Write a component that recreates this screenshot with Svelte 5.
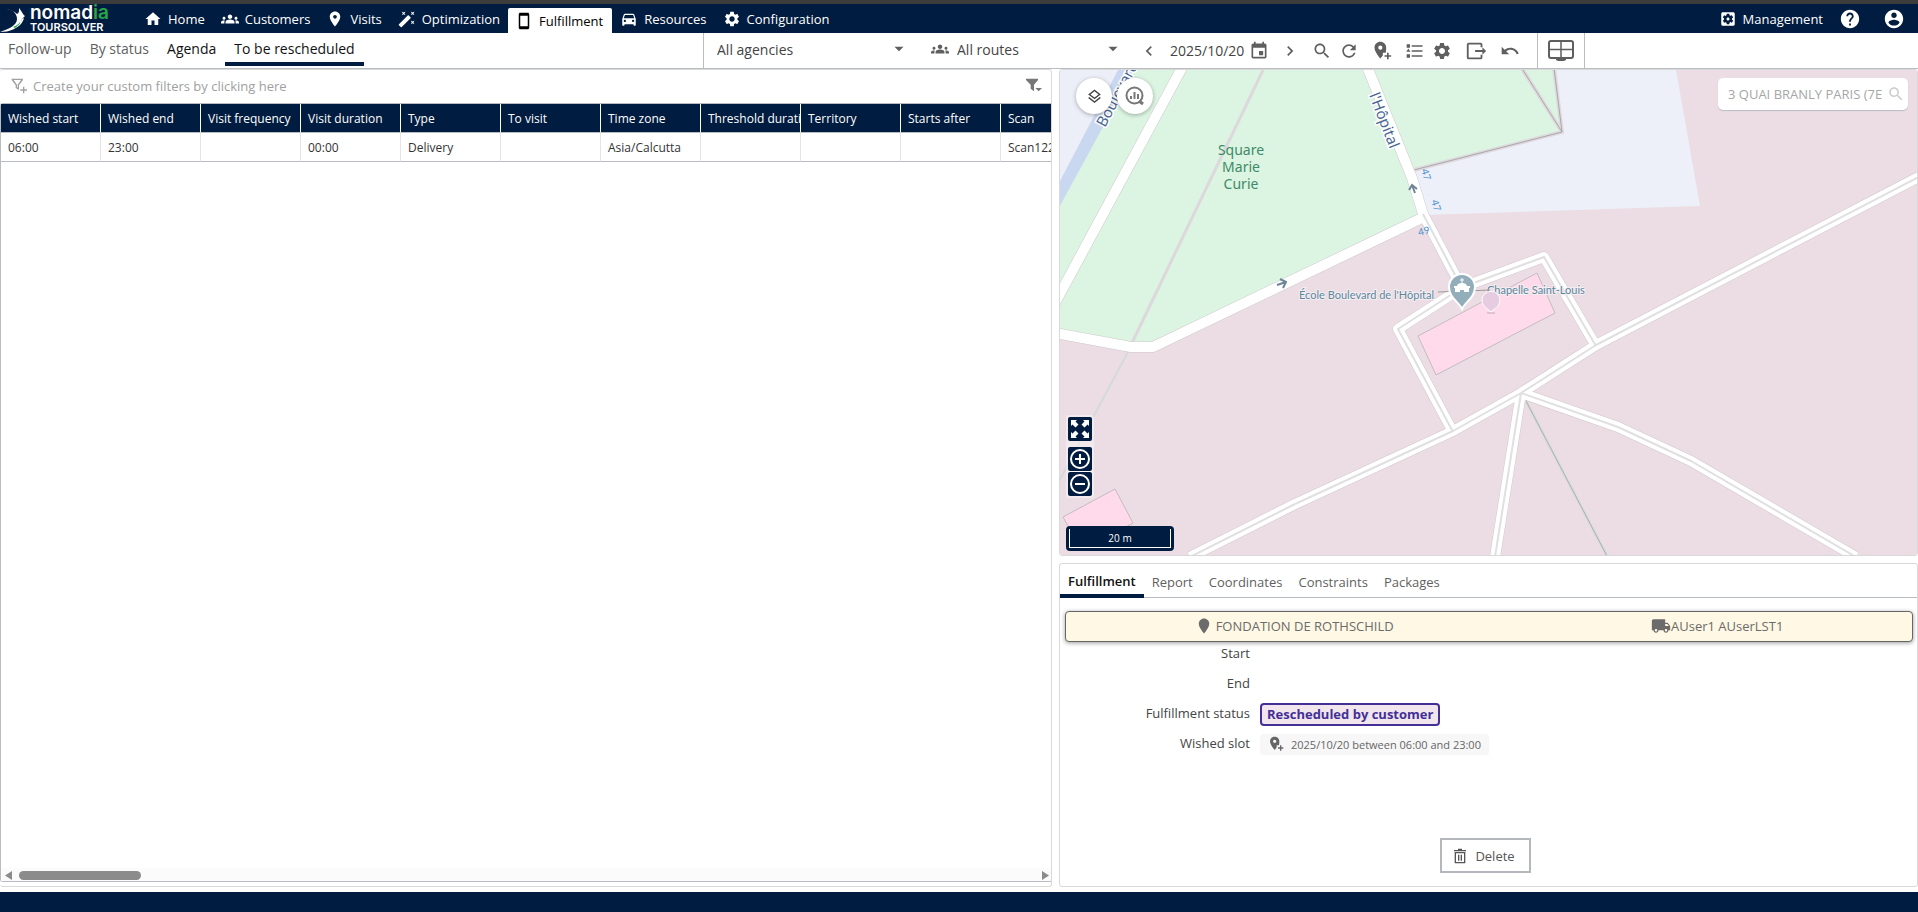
<script>
  const icons = {
    home: 'M10 20v-6h4v6h5v-8h3L12 3 2 12h3v8z',
    groups: 'M12 12.75c1.63 0 3.07.39 4.24.9 1.08.48 1.76 1.56 1.76 2.73V18H6v-1.61c0-1.18.68-2.26 1.76-2.73 1.17-.52 2.61-.91 4.24-.91zM4 13c1.1 0 2-.9 2-2s-.9-2-2-2-2 .9-2 2 .9 2 2 2zm1.13 1.1c-.37-.06-.74-.1-1.13-.1-.99 0-1.93.21-2.78.58C.48 14.9 0 15.62 0 16.43V18h4.5v-1.61c0-.83.23-1.61.63-2.29zM20 13c1.1 0 2-.9 2-2s-.9-2-2-2-2 .9-2 2 .9 2 2 2zm4 3.43c0-.81-.48-1.53-1.22-1.85-.85-.37-1.79-.58-2.78-.58-.39 0-.76.04-1.13.1.4.68.63 1.46.63 2.29V18H24v-1.57zM12 6c1.66 0 3 1.34 3 3s-1.34 3-3 3-3-1.34-3-3 1.34-3 3-3z',
    place: 'M12 2C8.13 2 5 5.13 5 9c0 5.25 7 13 7 13s7-7.75 7-13c0-3.87-3.13-7-7-7zm0 9.5c-1.38 0-2.5-1.12-2.5-2.5s1.12-2.5 2.5-2.5 2.5 1.12 2.5 2.5-1.12 2.5-2.5 2.5z',
    placeFull: 'M12 2C8.13 2 5 5.13 5 9c0 5.25 7 13 7 13s7-7.75 7-13c0-3.87-3.13-7-7-7z',
    placeAdd: 'M10 1C6.1 1 3 4.1 3 8c0 5.2 7 13 7 13l3-3.7V14h3.4C17 12 17 9 17 8c0-3.9-3.1-7-7-7zm0 9.5A2.5 2.5 0 1 1 10 5.5a2.5 2.5 0 0 1 0 5zM18 14h2v3h3v2h-3v3h-2v-3h-3v-2h3z',
    wand: 'M7.5 5.6 10 7 8.6 4.5 10 2 7.5 3.4 5 2l1.4 2.5L5 7zm12 9.8L17 14l1.4 2.5L17 19l2.5-1.4L22 19l-1.4-2.5L22 14zM22 2l-2.5 1.4L17 2l1.4 2.5L17 7l2.5-1.4L22 7l-1.4-2.5zm-7.63 5.29c-.39-.39-1.02-.39-1.41 0L1.29 18.96c-.39.39-.39 1.02 0 1.41l2.34 2.34c.39.39 1.02.39 1.41 0L16.7 11.05c.39-.39.39-1.02 0-1.41l-2.33-2.35z',
    phone: 'M17 1.01L7 1c-1.1 0-2 .9-2 2v18c0 1.1.9 2 2 2h10c1.1 0 2-.9 2-2V3c0-1.1-.9-1.99-2-1.99zM17 19H7V5h10v14z',
    car: 'M18.92 6.01C18.72 5.42 18.16 5 17.5 5h-11c-.66 0-1.21.42-1.42 1.01L3 12v8c0 .55.45 1 1 1h1c.55 0 1-.45 1-1v-1h12v1c0 .55.45 1 1 1h1c.55 0 1-.45 1-1v-8l-2.08-5.99zM6.5 16c-.83 0-1.5-.67-1.5-1.5S5.67 13 6.5 13s1.5.67 1.5 1.5S7.33 16 6.5 16zm11 0c-.83 0-1.5-.67-1.5-1.5s.67-1.5 1.5-1.5 1.5.67 1.5 1.5-.67 1.5-1.5 1.5zM5 11l1.5-4.5h11L19 11H5z',
    gear: 'M19.14 12.94c.04-.3.06-.61.06-.94 0-.32-.02-.64-.07-.94l2.03-1.58c.18-.14.23-.41.12-.61l-1.92-3.32c-.12-.22-.37-.29-.59-.22l-2.39.96c-.5-.38-1.03-.7-1.62-.94l-.36-2.54c-.04-.24-.24-.41-.48-.41h-3.84c-.24 0-.43.17-.47.41l-.36 2.54c-.59.24-1.13.57-1.62.94l-2.39-.96c-.22-.08-.47 0-.59.22L2.74 8.87c-.12.21-.08.47.12.61l2.03 1.58c-.05.3-.09.63-.09.94s.02.64.07.94l-2.03 1.58c-.18.14-.23.41-.12.61l1.92 3.32c.12.22.37.29.59.22l2.39-.96c.5.38 1.03.7 1.62.94l.36 2.54c.05.24.24.41.48.41h3.84c.24 0 .44-.17.47-.41l.36-2.54c.59-.24 1.13-.56 1.62-.94l2.39.96c.22.08.47 0 .59-.22l1.92-3.32c.12-.22.07-.47-.12-.61l-2.01-1.58zM12 15.6c-1.98 0-3.6-1.62-3.6-3.6s1.62-3.6 3.6-3.6 3.6 1.62 3.6 3.6-1.62 3.6-3.6 3.6z',
    gearBox: 'M12 10c-1.1 0-2 .9-2 2s.9 2 2 2 2-.9 2-2-.9-2-2-2zm7-7H5c-1.11 0-2 .9-2 2v14c0 1.1.89 2 2 2h14c1.11 0 2-.9 2-2V5c0-1.1-.89-2-2-2zm-1.75 9c0 .23-.02.46-.05.68l1.48 1.16c.13.11.17.3.08.45l-1.4 2.42c-.09.15-.27.21-.43.15l-1.74-.7c-.36.28-.76.51-1.18.69l-.26 1.85c-.03.17-.18.3-.35.3h-2.8c-.17 0-.32-.13-.35-.29l-.26-1.85c-.43-.18-.82-.41-1.18-.69l-1.74.7c-.16.06-.34 0-.43-.15l-1.4-2.42c-.09-.15-.05-.34.08-.45l1.48-1.16c-.03-.23-.05-.46-.05-.69 0-.23.02-.46.05-.68l-1.48-1.16c-.13-.11-.17-.3-.08-.45l1.4-2.42c.09-.15.27-.21.43-.15l1.74.7c.36-.28.76-.51 1.18-.69l.26-1.85c.03-.17.18-.3.35-.3h2.8c.17 0 .32.13.35.29l.26 1.85c.43.18.82.41 1.18.69l1.74-.7c.16-.06.34 0 .43.15l1.4 2.42c.09.15.05.34-.08.45l-1.48 1.16c.03.23.05.46.05.69z',
    help: 'M12 2C6.48 2 2 6.48 2 12s4.48 10 10 10 10-4.48 10-10S17.52 2 12 2zm1 17h-2v-2h2v2zm2.07-7.75l-.9.92C13.45 12.9 13 13.5 13 15h-2v-.5c0-1.1.45-2.1 1.17-2.83l1.24-1.26c.37-.36.59-.86.59-1.41 0-1.1-.9-2-2-2s-2 .9-2 2H8c0-2.21 1.79-4 4-4s4 1.79 4 4c0 .88-.36 1.68-.93 2.25z',
    account: 'M12 2C6.48 2 2 6.48 2 12s4.48 10 10 10 10-4.48 10-10S17.52 2 12 2zm0 3c1.66 0 3 1.34 3 3s-1.34 3-3 3-3-1.34-3-3 1.34-3 3-3zm0 14.2c-2.5 0-4.71-1.28-6-3.22.03-1.99 4-3.08 6-3.08 1.99 0 5.97 1.09 6 3.08-1.29 1.94-3.5 3.22-6 3.22z',
    search: 'M15.5 14h-.79l-.28-.27C15.41 12.59 16 11.11 16 9.5 16 5.91 13.09 3 9.5 3S3 5.91 3 9.5 5.91 16 9.5 16c1.61 0 3.09-.59 4.23-1.57l.27.28v.79l5 4.99L20.49 19l-4.99-5zm-6 0C7.01 14 5 11.99 5 9.5S7.01 5 9.5 5 14 7.01 14 9.5 11.99 14 9.5 14z',
    refresh: 'M17.65 6.35C16.2 4.9 14.21 4 12 4c-4.42 0-7.99 3.58-7.99 8s3.57 8 7.99 8c3.73 0 6.84-2.55 7.73-6h-2.08c-.82 2.33-3.04 4-5.65 4-3.31 0-6-2.69-6-6s2.69-6 6-6c1.66 0 3.14.69 4.22 1.78L13 11h7V4l-2.35 2.35z',
    left: 'M15.41 7.41 14 6l-6 6 6 6 1.41-1.41L10.83 12z',
    right: 'M10 6 8.59 7.41 13.17 12l-4.58 4.59L10 18l6-6z',
    down: 'M6 9l6 6 6-6z',
    event: 'M17 12h-5v5h5v-5zM16 1v2H8V1H6v2H5c-1.11 0-1.99.9-1.99 2L3 19c0 1.1.89 2 2 2h14c1.1 0 2-.9 2-2V5c0-1.1-.9-2-2-2h-1V1h-2zm3 18H5V8h14v11z',
    list: 'M8 5h13v2H8zM8 11h13v2H8zM8 17h13v2H8zM2 4h4v4H2zM4 9l2.5 4h-5zM2 16h4v4H2z',
    exit: 'M4 3h13a2 2 0 0 1 2 2v3h-2V5H4v14h13v-3h2v3a2 2 0 0 1-2 2H4a2 2 0 0 1-2-2V5a2 2 0 0 1 2-2zM19 8l4 4-4 4v-3h-8v-2h8z',
    undo: 'M12.5 8c-2.65 0-5.05.99-6.9 2.6L2 7v9h9l-3.62-3.62c1.39-1.16 3.16-1.88 5.12-1.88 3.54 0 6.55 2.31 7.6 5.5l2.37-.78C21.08 11.03 17.15 8 12.5 8z',
    layers: 'M11.99 18.54l-7.37-5.73L3 14.07l9 7 9-7-1.63-1.27zM12 16l7.36-5.73L21 9l-9-7-9 7 1.63 1.27L12 16zm0-11.47L17.74 9 12 13.47 6.26 9 12 4.53z',
    truck: 'M20 8h-3V4H3c-1.1 0-2 .9-2 2v11h2c0 1.66 1.34 3 3 3s3-1.34 3-3h6c0 1.66 1.34 3 3 3s3-1.34 3-3h2v-5l-3-4zM6 18.5c-.83 0-1.5-.67-1.5-1.5s.67-1.5 1.5-1.5 1.5.67 1.5 1.5-.67 1.5-1.5 1.5zm13.5-9l1.96 2.5H17V9.5h2.5zm-1.5 9c-.83 0-1.5-.67-1.5-1.5s.67-1.5 1.5-1.5 1.5.67 1.5 1.5-.67 1.5-1.5 1.5z',
    filterAdd: 'M1 1h17v2l-6 8v7l-5-3v-4L1 3zM4 3l5 7v4l1 1v-5l5-7zM18 13h2v4h4v2h-4v4h-2v-4h-4v-2h4z',
    filter: 'M0 1h18v2l-6 7v10l-5-4v-6L0 3zM14 15h10l-5 5z',
    expand: 'M3 3h6L7.5 4.500l3 3-3 3-3-3L3 9zM21 3v6l-1.500-1.500-3 3-3-3 3-3L15 3zM21 21h-6l1.500-1.500-3-3 3-3 3 3L21 15zM3 21v-6l1.500 1.500 3-3 3 3-3 3L9 21z',
    trash: 'M9 1h6v2h6v2H3V3h6zM4 6h16v17H4zm2 2v13h12V8zM9 10h2v9H9zM13 10h2v9h-2z',
  }

  const menu = [
    { label: 'Home', icon: 'home' },
    { label: 'Customers', icon: 'groups' },
    { label: 'Visits', icon: 'place' },
    { label: 'Optimization', icon: 'wand' },
    { label: 'Fulfillment', icon: 'phone' },
    { label: 'Resources', icon: 'car' },
    { label: 'Configuration', icon: 'gear' },
  ]
  const views = [
    { label: 'Follow-up' },
    { label: 'By status' },
    { label: 'Agenda', dark: true },
    { label: 'To be rescheduled', dark: true },
  ]
  const tabs = ['Fulfillment', 'Report', 'Coordinates', 'Constraints', 'Packages']

  const columns = ['Wished start', 'Wished end', 'Visit frequency', 'Visit duration', 'Type', 'To visit', 'Time zone', 'Threshold duration', 'Territory', 'Starts after', 'Scan']
  const rows = [['06:00', '23:00', '', '00:00', 'Delivery', '', 'Asia/Calcutta', '', '', '', 'Scan122']]

  // footpaths: white band with a grey centre line
  const paths = [
    'M1423 214L1463 290',
    'M1453 432L1398 329L1463 287L1544 257L1596 346',
    'M1521 393L1618 427L1691 461L1856 557',
    'M1521 393L1495 557',
    'M1930 171L1596 345L1521 393L1453 431L1293 505L1190 557',
  ]
  const roads = [
    'M1184 64L1055 303',
    'M1366 64L1412 178L1424 217',
    'M1050 332L1131 347H1153L1424 217',
  ]

  let currentMenu = $state('Fulfillment')
  let currentView = $state('To be rescheduled')
  let currentTab = $state('Fulfillment')
  let address = $state('')
</script>

{#snippet icon(name, size = 18)}
  <svg class="icon" width={size} height={size} viewBox="0 0 24 24" aria-hidden="true">
    <path fill="currentColor" fill-rule="evenodd" d={icons[name]} />
  </svg>
{/snippet}

<div class="app">
  <header class="topbar">
    <a class="logo" href="#home" aria-label="Nomadia TourSolver">
      <svg width="28" height="28" viewBox="0 0 28 28" aria-hidden="true">
        <path fill="#fff" d="M6 5C12 5 17 9 17 15C17 21 9 25 0 28C9 28 20 25 22 15L25 12C23 11 23 9 19 4C19 8 19 9 17 10C14 7 10 5 6 5Z" />
        <path fill="#fff" d="M17 23C20 22 23 18 24 14L22 15C21 19 18 22 14 24Z" />
        <path fill="#25a84a" d="M13 23C16 22 19 20 20 18C21 19 18 22 15 24Z" />
      </svg>
      <span class="brand">
        <span class="brand-name">nomad<em>ia</em></span>
        <span class="brand-product">TOURSOLVER</span>
      </span>
    </a>
    <nav class="menu">
      {#each menu as item}
        <a href="#{item.label}" class:active={item.label === currentMenu} onclick={() => (currentMenu = item.label)}>
          {@render icon(item.icon)}
          {item.label}
        </a>
      {/each}
    </nav>
    <div class="account">
      <a href="#management">{@render icon('gearBox')} Management</a>
      <button aria-label="Help">{@render icon('help', 22)}</button>
      <button aria-label="Account">{@render icon('account', 22)}</button>
    </div>
  </header>

  <div class="toolbar">
    <nav class="views">
      {#each views as view}
        <a
          href="#{view.label}"
          class:dark={view.dark}
          class:active={view.label === currentView}
          onclick={() => (currentView = view.label)}>{view.label}</a>
      {/each}
    </nav>
    <div class="picker agencies">
      <select aria-label="Agencies"><option>All agencies</option></select>
      {@render icon('down')}
    </div>
    <div class="picker routes">
      {@render icon('groups')}
      <select aria-label="Routes"><option>All routes</option></select>
      {@render icon('down')}
    </div>
    <div class="date">
      <button aria-label="Previous day">{@render icon('left', 20)}</button>
      <button class="day"><span>2025/10/20</span> {@render icon('event', 20)}</button>
      <button aria-label="Next day">{@render icon('right', 20)}</button>
    </div>
    <div class="tools">
      <button aria-label="Search">{@render icon('search', 20)}</button>
      <button aria-label="Refresh">{@render icon('refresh', 20)}</button>
      <button class="wide" aria-label="Add a visit">{@render icon('placeAdd', 20)}</button>
      <button aria-label="List">{@render icon('list', 20)}</button>
      <button aria-label="Settings">{@render icon('gear', 20)}</button>
      <button class="wide" aria-label="Export">{@render icon('exit', 22)}</button>
      <button aria-label="Undo">{@render icon('undo', 20)}</button>
    </div>
    <button class="layout" aria-label="Layout">
      <svg width="26" height="22" viewBox="0 0 26 22" aria-hidden="true">
        <rect x="1" y="1" width="24" height="17" rx="2" fill="none" stroke="currentColor" stroke-width="2" />
        <path d="M13 2V17M2 9.5H24" stroke="currentColor" stroke-width="1.5" />
        <path d="M8 18H18V20L16 21H10L8 20Z" fill="currentColor" />
      </svg>
    </button>
  </div>

  <main>
    <section class="panel list">
      <div class="filters">
        <button class="create">{@render icon('filterAdd', 16)} Create your custom filters by clicking here</button>
        <button class="filter" aria-label="Filter">{@render icon('filter', 16)}</button>
      </div>
      <div class="grid">
        <div class="scroll">
          <table>
            <thead>
              <tr>{#each columns as column}<th>{column}</th>{/each}</tr>
            </thead>
            <tbody>
              {#each rows as row}
                <tr>{#each row as cell}<td>{cell}</td>{/each}</tr>
              {/each}
            </tbody>
          </table>
        </div>
        <div class="scrollbar">
          <svg width="8" height="9" viewBox="0 0 8 9" aria-hidden="true"><path d="M7 0V9L0 4.5Z" fill="#8b8b8b" /></svg>
          <div class="track"><div class="thumb"></div></div>
          <svg width="8" height="9" viewBox="0 0 8 9" aria-hidden="true"><path d="M1 0V9L8 4.5Z" fill="#8b8b8b" /></svg>
        </div>
      </div>
    </section>

    <div class="side">
      <section class="panel map">
        <svg class="canvas" viewBox="1060 70 857 485" preserveAspectRatio="xMinYMin slice" role="img" aria-label="Map">
          <rect x="1050" y="60" width="880" height="505" fill="#ebdde3" />
          <path d="M1050 70H1370L1424 215L1153 347H1131L1050 332Z" fill="#dcf4e2" />
          <path d="M1050 70H1126L1050 209Z" fill="#edeff8" />
          <path d="M1118 70H1134L1050 224V200Z" fill="#c9d7f0" />
          <path d="M1370 70H1676L1700 206L1424 215Z" fill="#edf0f9" />
          <path d="M1370 70H1554L1562 132L1414 170Z" fill="#dcf4e2" />

          <g fill="none">
            <path d="M1410 171L1562 132L1554 68M1562 132L1521 67" stroke="#dedade" stroke-width="4" />
            <path d="M1410 171L1562 132L1554 68M1562 132L1521 67" stroke="#aaa6a9" />
            <path d="M1263 70L1131 345" stroke="#dcd8db" stroke-width="3" />
            <path d="M1129 350L1057 485" stroke="#d5dad8" stroke-width="2" />
            <path d="M1526 401L1607 556" stroke="#dcdadc" stroke-width="3" />
            <path d="M1526 401L1607 556" stroke="#a5b3ae" />
          </g>

          <g fill="none" stroke-linejoin="round">
            {#each [...roads, ...paths] as d}<path {d} stroke="#cfc9cc" stroke-width="11" />{/each}
            {#each roads as d}<path {d} stroke="#fff" stroke-width="10" />{/each}
            {#each paths as d}<path {d} stroke="#fff" stroke-width="10" />{/each}
            {#each paths as d}<path {d} stroke="#e0e0e0" stroke-width="2" />{/each}
          </g>

          <g fill="#ffdaea" stroke="#c3bcbf">
            <path d="M1418 336L1537 273L1555 313L1436 375Z" />
            <path d="M1063 517L1115 489L1133 523L1082 551Z" />
          </g>

          <g fill="none" stroke="#6d8597" stroke-width="2">
            <path d="M1277 285L1286 282M1280 279L1286 282L1283 288" />
            <path d="M1415 193L1412 185M1409 190L1412 185L1417 189" />
          </g>

          <g class="label park" text-anchor="middle">
            <text x="1241" y="155">Square</text>
            <text x="1241" y="172">Marie</text>
            <text x="1241" y="189">Curie</text>
          </g>
          <g class="label street">
            <text transform="translate(1105 128) rotate(-62)">Boulevard</text>
            <text transform="translate(1369 95) rotate(69)">l'Hôpital</text>
          </g>
          <g class="label number">
            <text transform="translate(1421 170) rotate(72)">47</text>
            <text transform="translate(1431 201) rotate(72)">47</text>
            <text transform="translate(1419 236) rotate(-14)">49</text>
          </g>
          <g class="label poi">
            <text x="1299" y="299">École Boulevard de l'Hôpital</text>
            <text x="1487" y="294">Chapelle Saint-Louis</text>
          </g>
          <path d="M1438 292L1490 290" stroke="#9a9a9a" stroke-width="1" />
          <path d="M1462 309C1459 302 1449 298 1449 287A13 13 0 0 1 1475 287C1475 298 1465 302 1462 309Z" fill="#93aebb" stroke="#fff" stroke-width="2" />
          <path d="M1462 278V284M1460 280H1464" stroke="#fff" fill="none" />
          <path d="M1457 286C1457 282 1467 282 1467 286H1470V288H1469V292H1464V290H1460V292H1455V288H1454V286Z" fill="#fff" />
          <path d="M1487 313H1495" stroke="#bfa9ba" />
          <path d="M1491 312L1484 306A9 9 0 1 1 1498 306Z" fill="#e5cce1" stroke="#fff" />
        </svg>

        <div class="map-buttons">
          <button aria-label="Layers">{@render icon('layers', 17)}</button>
          <button aria-label="Statistics">
            <svg width="20" height="20" viewBox="0 0 20 20" aria-hidden="true">
              <circle cx="9.5" cy="9.5" r="8" fill="none" stroke="#777" stroke-width="2" />
              <path d="M6 10V13M9.5 6V13M13 8V13" stroke="#777" stroke-width="2" />
              <path d="M14 15L18 18" stroke="#777" stroke-width="3" />
            </svg>
          </button>
        </div>
        <div class="map-search">
          <input type="text" aria-label="Address" placeholder="3 QUAI BRANLY PARIS (7E" bind:value={address} />
          {@render icon('search', 18)}
        </div>
        <div class="map-zoom">
          <button aria-label="Full extent">{@render icon('expand', 24)}</button>
          <div class="zoom-pair">
            <button aria-label="Zoom in">
              <svg width="20" height="20" viewBox="0 0 20 20" aria-hidden="true" fill="none" stroke="#fff" stroke-width="2"><circle cx="10" cy="10" r="9" /><path d="M5 10H15M10 5V15" /></svg>
            </button>
            <button aria-label="Zoom out">
              <svg width="20" height="20" viewBox="0 0 20 20" aria-hidden="true" fill="none" stroke="#fff" stroke-width="2"><circle cx="10" cy="10" r="9" /><path d="M5 10H15" /></svg>
            </button>
          </div>
        </div>
        <div class="scale"><span>20 m</span></div>
      </section>

      <section class="panel details">
        <div class="tabs" role="tablist">
          {#each tabs as tab}
            <button role="tab" aria-selected={tab === currentTab} class:active={tab === currentTab} onclick={() => (currentTab = tab)}>{tab}</button>
          {/each}
        </div>
        <div class="banner">
          <span class="customer">{@render icon('placeFull')} FONDATION DE ROTHSCHILD</span>
          <span class="driver">{@render icon('truck', 20)}AUser1 AUserLST1</span>
        </div>
        <dl>
          <dt>Start</dt>
          <dd></dd>
          <dt>End</dt>
          <dd></dd>
          <dt>Fulfillment status</dt>
          <dd><span class="status">Rescheduled by customer</span></dd>
          <dt>Wished slot</dt>
          <dd><span class="slot">{@render icon('placeAdd', 16)} 2025/10/20 between 06:00 and 23:00</span></dd>
        </dl>
        <div class="actions">
          <button>{@render icon('trash', 16)} Delete</button>
        </div>
      </section>
    </div>
  </main>

  <footer></footer>
</div>

<style>
  :global(body) {
    margin: 0;
    background: #fff;
  }

  .app {
    --navy: #001c40;
    --line: #b9bdc1;
    --soft: #d9d9d9;
    display: flex;
    flex-direction: column;
    height: 100vh;
    font-family: 'Open Sans', 'Noto Sans', sans-serif;
    font-size: 13px;
    color: #444;
  }

  button {
    display: flex;
    align-items: center;
    justify-content: center;
    border: none;
    padding: 0;
    background: none;
    color: inherit;
    font: inherit;
    cursor: pointer;
  }

  a {
    color: inherit;
    text-decoration: none;
  }

  .icon { flex-shrink: 0; }

  .topbar {
    display: flex;
    height: 29px;
    flex-shrink: 0;
    border-top: 4px solid #3c3c3c;
    background: var(--navy);
    color: #fff;
    font-weight: 500;
  }

  .logo {
    display: flex;
    width: 136px;
    gap: 2px;
    font-family: Inter, 'Open Sans', sans-serif;
  }

  .brand {
    display: flex;
    flex-direction: column;
  }

  .brand-name {
    font-size: 19px;
    line-height: 17px;
    font-weight: 600;
  }
  .brand-name em {
    font-style: normal;
    color: #25a84a;
  }

  .brand-product {
    font-size: 11px;
    line-height: 12px;
    font-weight: 600;
  }

  .menu {
    display: flex;
    align-items: flex-end;
  }
  .menu a {
    display: flex;
    align-items: center;
    gap: 6px;
    height: 27px;
    padding: 0 8px 2px;
    box-sizing: border-box;
  }
  .menu a.active {
    height: 25px;
    padding: 0 9px 0 7px;
    border-radius: 2px 2px 0 0;
    background: #fff;
    color: #000;
  }

  .account {
    display: flex;
    align-items: center;
    gap: 22px;
    margin-left: auto;
    padding-right: 13px;
  }
  .account a {
    display: flex;
    align-items: center;
    gap: 6px;
    margin-right: -6px;
  }

  .toolbar {
    display: flex;
    height: 35px;
    flex-shrink: 0;
    border-bottom: 1px solid var(--line);
    color: #5f5f5f;
    font-size: 14px;
  }

  .views {
    display: flex;
    width: 703px;
  }
  .views a {
    height: 29px;
    margin-bottom: 2px;
    padding: 0 9px;
    border-bottom: 4px solid transparent;
    line-height: 32px;
  }
  .views a:first-child { padding-left: 8px; }
  .views a.dark { color: #111; }
  .views a.active { border-color: var(--navy); }

  .picker {
    display: flex;
    align-items: center;
    padding-bottom: 3px;
  }
  .picker select {
    flex: 1;
    border: none;
    padding: 0;
    appearance: none;
    background: none;
    color: #444;
    font: inherit;
  }
  .agencies {
    width: 191px;
    padding-left: 13px;
    border-left: 1px solid var(--line);
  }
  .routes {
    width: 191px;
    gap: 8px;
    padding-left: 23px;
  }

  .date {
    display: flex;
    align-items: center;
    gap: 11px;
    padding-left: 17px;
  }
  .date .day { gap: 5px; }
  .date .day span { color: #444; }

  .tools {
    display: flex;
    align-items: center;
    gap: 7px;
    padding: 0 17px 0 12px;
  }
  .tools .wide { padding: 0 6px; }

  .layout {
    width: 48px;
    border: solid var(--line);
    border-width: 0 1px;
  }

  main {
    display: grid;
    grid-template-columns: 1052fr 859fr;
    gap: 7px;
    flex: 1;
    min-height: 0;
  }

  .panel {
    box-sizing: border-box;
    border: 1px solid var(--soft);
    border-radius: 3px;
    min-width: 0;
    min-height: 0;
    overflow: hidden;
  }

  .list {
    display: flex;
    flex-direction: column;
    border-left: none;
  }

  .filters {
    display: flex;
    justify-content: space-between;
    height: 31px;
    padding: 0 9px 2px 11px;
    flex-shrink: 0;
  }
  .filters .create {
    gap: 6px;
    color: #a0a0a0;
  }
  .filters .filter { color: #777; }

  .grid {
    display: flex;
    flex-direction: column;
    flex: 1;
    min-height: 0;
    margin-bottom: 4px;
    border: solid var(--line);
    border-width: 1px 0 1px 1px;
    border-radius: 3px 0 0 3px;
  }

  .scroll {
    flex: 1;
    overflow: hidden;
  }

  table {
    width: 1100px;
    border-collapse: separate;
    border-spacing: 0;
    table-layout: fixed;
    font-size: 12px;
  }
  th, td {
    height: 29px;
    box-sizing: border-box;
    padding: 0 0 0 7px;
    overflow: hidden;
    text-align: left;
    white-space: nowrap;
  }
  th {
    border-right: 1px solid #fff;
    border-bottom: 1px solid var(--line);
    background: var(--navy);
    color: #fff;
    font-weight: 500;
  }
  td {
    border-right: 1px solid #e4e4e4;
    border-bottom: 1px solid var(--line);
    color: #333;
  }

  .scrollbar {
    display: flex;
    align-items: flex-end;
    gap: 6px;
    height: 12px;
    padding: 0 2px 1px 4px;
    background: #fbfbfb;
  }
  .track { flex: 1; }
  .thumb {
    width: 12%;
    height: 9px;
    border-radius: 5px;
    background: #8b8b8b;
  }

  .side {
    display: grid;
    grid-template-rows: 487fr 324fr;
    gap: 7px;
    min-width: 0;
    min-height: 0;
  }

  .map { position: relative; }
  .canvas {
    display: block;
    width: 100%;
    height: 100%;
  }

  .label { font-family: Lato, 'Open Sans', sans-serif; }
  .park {
    font-family: 'Noto Sans', sans-serif;
    font-size: 14px;
    fill: #3f8a68;
  }
  .street {
    font-family: 'Noto Sans', sans-serif;
    font-size: 15px;
    fill: #4a6796;
    stroke: #fff;
    stroke-width: 3px;
    paint-order: stroke;
  }
  .number {
    font-size: 10px;
    fill: #4b8fd0;
  }
  .poi {
    font-size: 11px;
    fill: #5c859e;
    stroke: #f5eef1;
    stroke-width: 2px;
    paint-order: stroke;
  }

  .map-buttons {
    position: absolute;
    top: 8px;
    left: 16px;
    display: flex;
    gap: 5px;
  }
  .map-buttons button {
    width: 36px;
    height: 36px;
    border-radius: 50%;
    background: #fff;
    box-shadow: 0 1px 4px rgba(0, 0, 0, 0.3);
  }

  .map-search {
    position: absolute;
    top: 8px;
    right: 9px;
    display: flex;
    align-items: center;
    width: 190px;
    height: 32px;
    box-sizing: border-box;
    padding: 0 3px 0 10px;
    border-radius: 5px;
    background: #fff;
    box-shadow: 0 1px 1px #b9bdc1;
    color: #ccc;
  }
  .map-search input {
    flex: 1;
    min-width: 0;
    margin-right: 2px;
    border: none;
    padding: 0;
    outline: none;
    background: none;
    color: #444;
    font: inherit;
  }
  .map-search input::placeholder { color: #a6a6a6; }

  .map-zoom {
    position: absolute;
    left: 6px;
    bottom: 57px;
    display: flex;
    flex-direction: column;
    gap: 6px;
    padding: 2px;
    border-radius: 3px;
    background: rgba(255, 255, 255, 0.4);
  }
  .map-zoom button {
    width: 24px;
    height: 24px;
    border-radius: 2px;
    background: var(--navy);
    color: #fff;
  }
  .zoom-pair {
    display: flex;
    flex-direction: column;
    gap: 1px;
    background: #fff;
  }

  .scale {
    position: absolute;
    left: 6px;
    bottom: 4px;
    padding: 3px;
    border-radius: 4px;
    background: var(--navy);
    color: #fff;
    font-size: 10px;
  }
  .scale span {
    display: block;
    width: 100px;
    height: 18px;
    border: 1px solid #fff;
    border-top: none;
    line-height: 18px;
    text-align: center;
  }

  .details {
    display: flex;
    flex-direction: column;
  }

  .tabs {
    display: flex;
    height: 33px;
    flex-shrink: 0;
    border-bottom: 1px solid var(--line);
    color: #5f5f5f;
  }
  .tabs button {
    height: 34px;
    padding: 2px 8px 0;
  }
  .tabs button.active {
    padding: 4px 8px 0;
    border-bottom: 4px solid var(--navy);
    color: #111;
    font-weight: 600;
  }

  .banner {
    display: flex;
    align-items: center;
    justify-content: space-around;
    height: 29px;
    margin: 13px 4px 0 5px;
    flex-shrink: 0;
    border: 1px solid #666;
    border-radius: 4px;
    background: #fff8e4;
    box-shadow: 0 1px 4px rgba(0, 0, 0, 0.4);
    color: #6b6b6b;
  }
  .banner span {
    display: flex;
    align-items: center;
    padding-bottom: 2px;
  }
  .banner .customer { gap: 3px; }

  dl {
    display: grid;
    grid-template-columns: 190px 1fr;
    grid-auto-rows: 24px;
    gap: 6px 10px;
    margin: 0;
    line-height: 23px;
  }
  dt { text-align: right; }
  dd {
    display: flex;
    align-items: center;
    margin: 0;
  }

  .status {
    padding: 0 5px;
    border: 2px solid #432f96;
    border-radius: 4px;
    background: #f1e6ee;
    color: #432f96;
    font-weight: 700;
    line-height: 19px;
  }

  .slot {
    display: flex;
    align-items: center;
    gap: 7px;
    height: 21px;
    padding: 0 8px;
    border-radius: 3px;
    background: #f7f7f7;
    color: #666;
    font-size: 11px;
  }

  .actions {
    display: flex;
    justify-content: center;
    margin-top: auto;
    padding: 0 6px 13px 0;
  }
  .actions button {
    gap: 7px;
    height: 35px;
    padding: 0 14px 0 10px;
    border: 2px solid #b4b8bc;
    color: #555;
  }

  footer {
    height: 20px;
    margin-top: 5px;
    flex-shrink: 0;
    background: var(--navy);
  }
</style>
